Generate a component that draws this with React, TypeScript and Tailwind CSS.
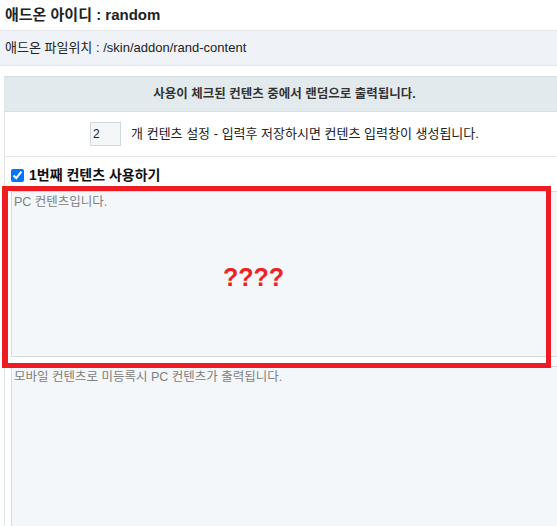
import React from 'react'

const font = { fontFamily: '"Liberation Sans", "Noto Sans CJK KR", sans-serif' }

const App = () => {
  return (
    <div className="relative w-[557px] h-[526px] overflow-hidden bg-white text-[#333]" style={font}>
      {/* addon info */}
      <div className="h-[31px] border-b border-[#e5e7ea] pl-[5px] flex items-center">
        <h1 className="text-[15px] font-bold text-[#222]">애드온 아이디 : random</h1>
      </div>
      <div className="h-[35px] bg-[#eff2f7] border-b border-[#e3e6ea] pl-[5px] flex items-center text-[13px] text-[#222]">
        애드온 파일위치 : /skin/addon/rand-content
      </div>

      {/* settings table */}
      <div className="mt-[10px] ml-[4px] w-[560px] border-l border-[#dfe4e7]">
        <div className="h-[36px] bg-[#e3eaee] border-t border-b border-[#d6dee2] flex items-center justify-center text-[12.5px] font-bold text-[#333]">
          사용이 체크된 컨텐츠 중에서 랜덤으로 출력됩니다.
        </div>
        <div className="h-[45px] border-b border-[#e6e8ea] flex items-center justify-center gap-[10px] text-[13px] text-[#222]">
          <input
            type="text"
            defaultValue="2"
            className="w-[31px] h-[24px] bg-[#f4f7f8] border border-[#cfd8dc] px-[2px] text-[12px] outline-none"
          />
          <span>개 컨텐츠 설정 - 입력후 저장하시면 컨텐츠 입력창이 생성됩니다.</span>
        </div>
        <div className="pl-[6px]">
          <label className="h-[34px] flex items-center gap-[5px] pt-[2px]">
            <input type="checkbox" defaultChecked className="w-[13px] h-[13px] m-0 accent-[#0075ff]" />
            <span className="text-[14px] font-bold text-[#111]">1번째 컨텐츠 사용하기</span>
          </label>
          <textarea
            placeholder="PC 컨텐츠입니다."
            className="block w-[560px] h-[166px] bg-[#f4f7f9] border border-[#d3dce1] px-[2px] py-[1px] text-[12.5px] placeholder:text-[#808080] resize-none outline-none"
          />
          <textarea
            placeholder="모바일 컨텐츠로 미등록시 PC 컨텐츠가 출력됩니다."
            className="block mt-[9px] w-[560px] h-[170px] bg-[#f4f7f9] border border-[#d3dce1] px-[2px] py-[1px] text-[12.5px] placeholder:text-[#808080] resize-none outline-none"
          />
        </div>
      </div>

      {/* annotation */}
      <div className="absolute left-[2px] top-[186px] w-[549px] h-[182px] border-[5px] border-l-[6px] border-[#ed1c24] pointer-events-none" />
      <div className="absolute left-[223px] top-[259px] text-[25px] font-bold text-[#ee2222] pointer-events-none">????</div>
    </div>
  )
}

export default App
